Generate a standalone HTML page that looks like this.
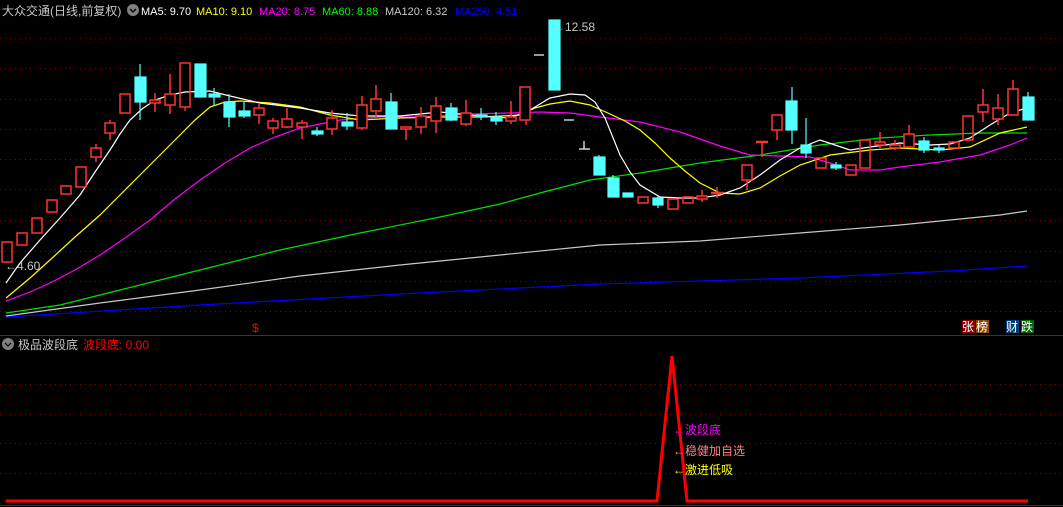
<!DOCTYPE html>
<html><head><meta charset="utf-8"><style>
html,body{margin:0;padding:0;background:#000;width:1063px;height:507px;overflow:hidden}
svg{display:block}
text{font-family:"Liberation Sans","Noto Sans CJK SC",sans-serif;font-size:12px}
.h{font-size:11px}
</style></head><body>
<svg width="1063" height="507" viewBox="0 0 1063 507" xmlns="http://www.w3.org/2000/svg">
<g stroke="#8b0000" stroke-dasharray="1 4" stroke-width="1">
<line x1="0" y1="38.5" x2="1063" y2="38.5"/><line x1="0" y1="68.5" x2="1063" y2="68.5"/>
<line x1="0" y1="99.5" x2="1063" y2="99.5"/><line x1="0" y1="129.5" x2="1063" y2="129.5"/>
<line x1="0" y1="159.5" x2="1063" y2="159.5"/><line x1="0" y1="189.5" x2="1063" y2="189.5"/>
<line x1="0" y1="220.5" x2="1063" y2="220.5"/><line x1="0" y1="251.5" x2="1063" y2="251.5"/>
<line x1="0" y1="281.5" x2="1063" y2="281.5"/><line x1="0" y1="311.5" x2="1063" y2="311.5"/>
<line x1="0" y1="384.5" x2="1063" y2="384.5"/><line x1="0" y1="414.5" x2="1063" y2="414.5"/>
<line x1="0" y1="443.5" x2="1063" y2="443.5"/><line x1="0" y1="473.5" x2="1063" y2="473.5"/>
</g>
<line x1="0" y1="335.5" x2="1063" y2="335.5" stroke="#b00000"/>
<line x1="0" y1="505.5" x2="1063" y2="505.5" stroke="#b00000"/>

<g fill="none" stroke-width="1.2">
<polyline stroke="#0000ff" points="6,317 200,305 400,294 600,284 800,278 950,271 1027,266"/>
<polyline stroke="#c8c8c8" points="6,316 100,303 200,290 300,276 400,265 500,255 600,245 700,241 800,233 900,225 1000,215 1027,211"/>
<polyline stroke="#00e000" points="6,313 60,305 120,290 200,270 280,250 360,233 440,217 500,204 540,193 590,180 640,173 700,163 760,155 820,145 880,138 930,135 980,133 1027,133"/>
<polyline stroke="#ff00ff" points="6,301 30,292 50,283 75,270 100,255 125,238 150,220 175,199 200,180 225,163 250,148 275,137 300,128 340,120 380,117 420,117 470,114 510,113 540,112 570,113 600,117 640,122 680,132 720,146 750,155 780,156 810,157 830,163 850,170 880,170 900,167 940,162 980,155 1010,145 1027,138"/>
<polyline stroke="#ffff00" points="6,298 30,278 50,260 75,237 100,215 120,195 140,175 160,155 180,135 195,120 210,107 225,102 240,101 270,103 300,107 330,115 360,120 400,118 440,117 480,117 520,115 535,108 550,104 570,101 590,105 610,114 625,121 640,130 655,143 670,158 685,171 700,183 720,193 740,194 760,188 780,176 800,165 830,155 870,150 900,148 940,150 970,147 1000,133 1027,127"/>
<polyline stroke="#ffffff" points="6,283 20,263 40,240 60,218 80,195 95,172 110,150 120,134 130,120 142,109 155,100 170,95 185,92 210,91 230,96 260,103 300,108 330,113 360,116 400,116 440,112 480,116 510,118 530,110 550,98 570,94 585,95 595,102 605,118 620,155 630,172 640,185 660,197 680,198 700,198 720,195 740,188 760,175 780,160 800,148 820,140 835,145 850,150 870,147 900,143 930,145 950,144 970,138 990,125 1010,113 1027,108"/>
</g>

<g stroke="#ff3232" fill="none" stroke-width="1.5">
<rect x="2" y="242" width="10" height="20"/>
<rect x="17" y="233" width="10" height="12"/>
<rect x="32" y="218" width="10" height="15"/>
<rect x="47" y="200" width="10" height="12"/>
<rect x="61" y="186" width="10" height="8"/>
<rect x="76" y="167" width="10" height="20"/>
<line x1="96" y1="144" x2="96" y2="162"/><rect x="91" y="148" width="10" height="9" fill="#000"/>
<line x1="110" y1="120" x2="110" y2="140"/><rect x="105" y="123" width="10" height="10" fill="#000"/>
<rect x="120" y="94" width="10" height="19"/>
<line x1="155" y1="93" x2="155" y2="112"/><rect x="150" y="100" width="10" height="3" fill="#000"/>
<line x1="170" y1="74" x2="170" y2="114"/><rect x="165" y="94" width="10" height="11" fill="#000"/>
<line x1="185" y1="107" x2="185" y2="111"/><rect x="180" y="63" width="10" height="44"/>
<line x1="259" y1="103" x2="259" y2="124"/><rect x="254" y="108" width="10" height="7" fill="#000"/>
<line x1="273" y1="118" x2="273" y2="134"/><rect x="268" y="121" width="10" height="7" fill="#000"/>
<line x1="287" y1="108" x2="287" y2="128"/><rect x="282" y="119" width="10" height="8" fill="#000"/>
<line x1="302" y1="120" x2="302" y2="139"/><rect x="297" y="123" width="10" height="4" fill="#000"/>
<line x1="332" y1="110" x2="332" y2="135"/><rect x="327" y="118" width="10" height="11" fill="#000"/>
<line x1="362" y1="96" x2="362" y2="130"/><rect x="357" y="105" width="10" height="23" fill="#000"/>
<line x1="376" y1="85" x2="376" y2="117"/><rect x="371" y="99" width="10" height="12" fill="#000"/>
<line x1="406" y1="127" x2="406" y2="140"/><rect x="401" y="127" width="10" height="2" fill="#000"/>
<line x1="421" y1="107" x2="421" y2="134"/><rect x="416" y="116" width="10" height="11" fill="#000"/>
<line x1="436" y1="97" x2="436" y2="133"/><rect x="431" y="106" width="10" height="15" fill="#000"/>
<line x1="466" y1="100" x2="466" y2="126"/><rect x="461" y="113" width="10" height="11" fill="#000"/>
<line x1="511" y1="101" x2="511" y2="124"/><rect x="506" y="117" width="10" height="4" fill="#000"/>
<line x1="526" y1="120" x2="526" y2="125"/><rect x="520" y="87" width="10" height="33" fill="#000"/>
<rect x="638" y="197" width="10" height="6"/>
<rect x="668" y="199" width="10" height="10"/>
<rect x="683" y="197" width="10" height="6"/>
<line x1="702" y1="190" x2="702" y2="202"/><rect x="697" y="196" width="10" height="3" fill="#000"/>
<line x1="717" y1="187" x2="717" y2="198"/><line x1="711" y1="193" x2="723" y2="193" stroke-width="2.5"/>
<line x1="747" y1="180" x2="747" y2="190"/><rect x="742" y="165" width="10" height="15" fill="#000"/>
<line x1="762" y1="142" x2="762" y2="157"/><line x1="756" y1="142" x2="768" y2="142" stroke-width="2.5"/>
<line x1="777" y1="130" x2="777" y2="140"/><rect x="772" y="115" width="10" height="15" fill="#000"/>
<rect x="816" y="158" width="10" height="10"/>
<rect x="846" y="165" width="10" height="10"/>
<rect x="860" y="140" width="10" height="28"/>
<line x1="880" y1="132" x2="880" y2="148"/><rect x="875" y="142" width="10" height="3" fill="#000"/>
<line x1="895" y1="140" x2="895" y2="150"/><rect x="890" y="145" width="10" height="3" fill="#000"/>
<line x1="909" y1="125" x2="909" y2="148"/><rect x="904" y="134" width="10" height="13" fill="#000"/>
<rect x="949" y="142" width="10" height="6"/>
<rect x="963" y="116" width="10" height="24"/>
<line x1="983" y1="89" x2="983" y2="122"/><rect x="978" y="105" width="10" height="7" fill="#000"/>
<line x1="998" y1="94" x2="998" y2="125"/><rect x="993" y="108" width="10" height="11" fill="#000"/>
<line x1="1013" y1="80" x2="1013" y2="89"/><rect x="1008" y="89" width="10" height="26" fill="#000"/>
</g>
<g stroke="#54ffff" fill="#54ffff" stroke-width="1.2">
<line x1="140" y1="64" x2="140" y2="120"/><rect x="135" y="77" width="11" height="25"/>
<rect x="195" y="64" width="11" height="33"/>
<line x1="214" y1="88" x2="214" y2="106"/><rect x="209" y="94" width="11" height="3"/>
<line x1="229" y1="94" x2="229" y2="127"/><rect x="224" y="102" width="11" height="15"/>
<line x1="244" y1="102" x2="244" y2="118"/><rect x="239" y="111" width="11" height="5"/>
<line x1="317" y1="127" x2="317" y2="136"/><rect x="312" y="131" width="11" height="3"/>
<line x1="347" y1="113" x2="347" y2="130"/><rect x="342" y="122" width="11" height="4"/>
<line x1="391" y1="93" x2="391" y2="129"/><rect x="386" y="102" width="11" height="27"/>
<line x1="451" y1="103" x2="451" y2="121"/><rect x="446" y="108" width="11" height="12"/>
<line x1="481" y1="108" x2="481" y2="120"/><rect x="476" y="115" width="11" height="2"/>
<line x1="496" y1="112" x2="496" y2="125"/><rect x="491" y="117" width="11" height="4"/>
<rect x="549" y="20" width="11" height="70"/>
<line x1="599" y1="155" x2="599" y2="175"/><rect x="594" y="157" width="11" height="18"/>
<line x1="613" y1="175" x2="613" y2="197"/><rect x="608" y="178" width="11" height="19"/>
<rect x="623" y="193" width="10" height="4"/>
<line x1="658" y1="196" x2="658" y2="208"/><rect x="653" y="198" width="10" height="7"/>
<line x1="792" y1="87" x2="792" y2="144"/><rect x="786" y="101" width="11" height="29"/>
<line x1="806" y1="118" x2="806" y2="158"/><rect x="801" y="145" width="10" height="8"/>
<line x1="836" y1="162" x2="836" y2="170"/><rect x="831" y="165" width="10" height="3"/>
<line x1="924" y1="137" x2="924" y2="153"/><rect x="919" y="141" width="10" height="9"/>
<line x1="939" y1="145" x2="939" y2="153"/><rect x="934" y="148" width="10" height="2"/>
<line x1="1028" y1="92" x2="1028" y2="97"/><rect x="1023" y="97" width="11" height="23"/>
</g>
<g stroke="#fff" stroke-width="1.2">
<line x1="534" y1="55" x2="544" y2="55"/><line x1="564" y1="120" x2="574" y2="120"/>
<line x1="579" y1="149" x2="590" y2="149"/><line x1="584" y1="141" x2="584" y2="149"/>
</g>

<text x="2" y="15" fill="#c8c8c8">大众交通(日线,前复权)</text>
<circle cx="133" cy="10" r="6" fill="#808080"/><path d="M130,9 l3,3 l3,-3" stroke="#000" fill="none" stroke-width="1.3"/>
<text class="h" x="141" y="15" fill="#ffffff">MA5: 9.70</text>
<text class="h" x="196" y="15" fill="#ffff00">MA10: 9.10</text>
<text class="h" x="259" y="15" fill="#ff00ff">MA20: 8.75</text>
<text class="h" x="322" y="15" fill="#00ff00">MA60: 8.88</text>
<text class="h" x="385" y="15" fill="#c8c8c8">MA120: 6.32</text>
<text class="h" x="455" y="15" fill="#0000ff">MA250: 4.51</text>
<text x="553" y="31" fill="#c8c8c8">←12.58</text>
<text x="5" y="270" fill="#c8c8c8">←4.60</text>
<text x="252" y="332" fill="#ff0000" font-size="11">$</text>
<rect x="962" y="320" width="13" height="13" fill="#8b0000"/><text x="962" y="331" fill="#fff">张</text>
<rect x="976" y="320" width="13" height="13" fill="#8b4500"/><text x="976" y="331" fill="#fff">榜</text>
<rect x="1006" y="320" width="13" height="13" fill="#003a7a"/><text x="1006" y="331" fill="#fff">财</text>
<rect x="1021" y="320" width="13" height="13" fill="#006400"/><text x="1021" y="331" fill="#fff">跌</text>

<circle cx="8" cy="344" r="6" fill="#808080"/><path d="M5,343 l3,3 l3,-3" stroke="#000" fill="none" stroke-width="1.3"/>
<text x="18" y="349" fill="#c8c8c8">极品波段底</text>
<text x="83" y="349" fill="#ff0000">波段底: 0.00</text>

<polyline fill="none" stroke="#ff0000" stroke-width="3" points="6,501 657,501 672,356 687,501 1028,501"/>
<text x="673" y="434" fill="#ff00ff">←波段底</text>
<text x="673" y="455" fill="#ff8080">←稳健加自选</text>
<text x="673" y="474" fill="#ffff00">←激进低吸</text>
</svg>
</body></html>
